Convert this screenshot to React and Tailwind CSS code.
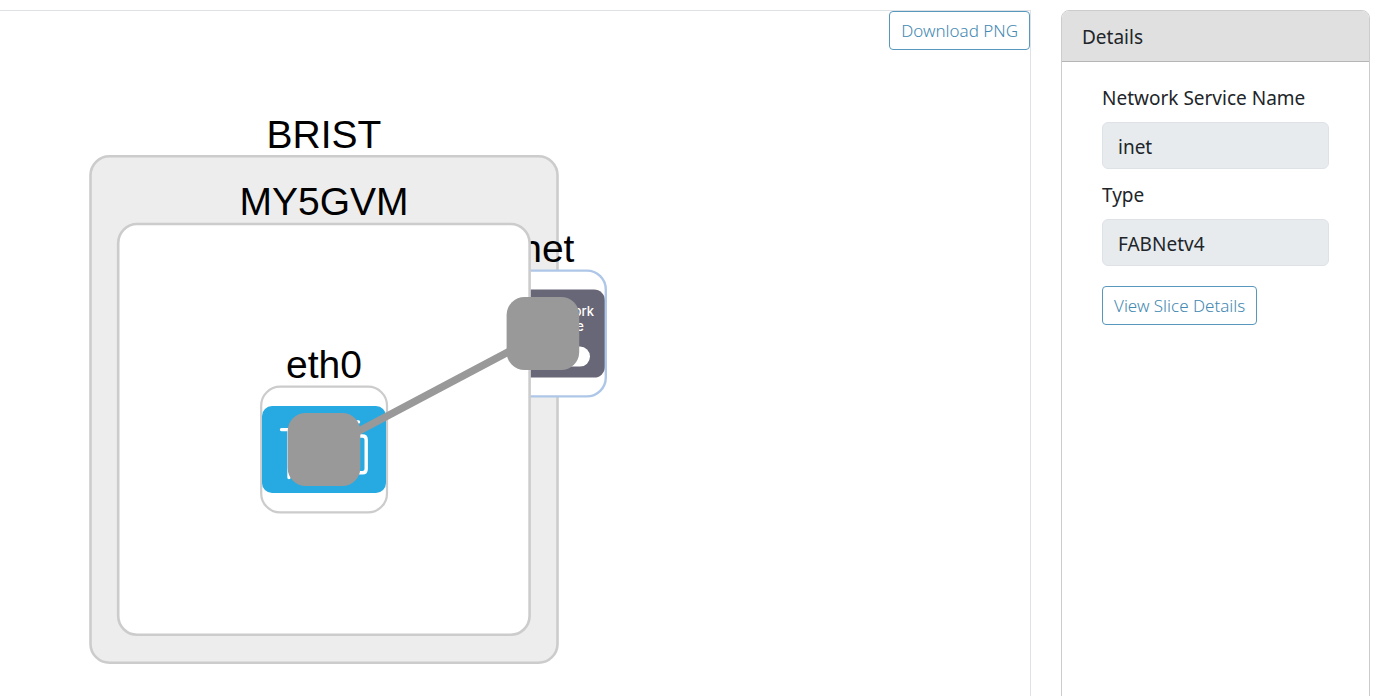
import { useId } from "react";

function TopologyGraph() {
  return (
    <svg
      width="1020"
      height="685"
      viewBox="0 11 1020 685"
      className="block shrink-0 font-['Liberation_Sans',Arial,sans-serif] text-[39px]"
      role="img"
      aria-label="Slice topology"
    >
      <rect x="90.5" y="156.3" width="467" height="506.4" rx="19" fill="#ededed" stroke="#cccccc" strokeWidth="2.6" />
      <text x="324" y="148" textAnchor="middle">BRIST</text>

      {/* network service node */}
      <text x="543" y="262" textAnchor="middle">inet</text>
      <rect x="480" y="270.6" width="125.8" height="125.8" rx="19" fill="#ffffff" />
      <rect x="481" y="289.6" width="124" height="88" rx="11" fill="#686777" />
      <text textAnchor="end" fill="#ffffff" className="font-['Inter',sans-serif] text-[13px] font-medium">
        <tspan x="594" y="316">Network</tspan>
        <tspan x="584" y="331">Service</tspan>
      </text>
      <rect x="496" y="346.6" width="94" height="20" rx="10" fill="#ffffff" />
      <rect x="480" y="270.6" width="125.8" height="125.8" rx="19" fill="none" stroke="#aec7e8" strokeWidth="2.4" />

      {/* virtual machine */}
      <rect x="118.2" y="224" width="411.4" height="410.8" rx="19" fill="#ffffff" stroke="#cccccc" strokeWidth="2.6" />
      <text x="324" y="215" textAnchor="middle">MY5GVM</text>

      {/* network interface */}
      <text x="324" y="378" textAnchor="middle">eth0</text>
      <rect x="261.2" y="386.6" width="125.8" height="125.8" rx="19" fill="#ffffff" stroke="#cccccc" strokeWidth="2.2" />
      <rect x="262" y="406" width="124" height="87" rx="10" fill="#27aae1" />
      <g fill="none" stroke="#ffffff" strokeWidth="3.4" strokeLinecap="round" strokeLinejoin="round">
        <path d="M281.5 429.6H289V477.5" />
        <path d="M340 422H358.5" />
        <path d="M350 436H362.5Q366.2 436 366.2 439.7V469Q366.2 472.8 362.5 472.8H350" />
      </g>

      <path d="M324 449.6L543 333.5" stroke="#999999" strokeWidth="7.4" />
      <rect x="287.7" y="413" width="72.6" height="73" rx="18" fill="#999999" />
      <rect x="506.6" y="297" width="72.6" height="73" rx="18" fill="#999999" />
    </svg>
  );
}

function OutlineButton({ children, className = "" }) {
  return (
    <button
      type="button"
      className={`rounded border border-[#5798bc] bg-white px-[11px] py-[5px] text-[17px] leading-[27px] font-light whitespace-nowrap text-[#4389b1] ${className}`}
    >
      {children}
    </button>
  );
}

function ReadOnlyField({ label, value }) {
  const id = useId();
  return (
    <div className="flex flex-col gap-[9px]">
      <label htmlFor={id} className="leading-[30px]">{label}</label>
      <input
        id={id}
        readOnly
        defaultValue={value}
        className="h-[47px] w-full rounded-md border border-[#dee2e6] bg-[#e7ebee] px-[15px] pt-[2px]"
      />
    </div>
  );
}

export default function App() {
  return (
    <div className="flex h-screen gap-[30px] overflow-hidden bg-white pt-[10px] pr-[13px] font-['Noto_Sans',sans-serif] text-[19px] text-[#212529]">
      <main className="relative flex min-w-0 flex-1 overflow-hidden border-t border-r border-[#dee2e6]">
        <TopologyGraph />
        <OutlineButton className="absolute top-0 right-0">Download PNG</OutlineButton>
      </main>
      <aside className="-mb-4 w-[309px] shrink-0 overflow-hidden rounded-lg border border-[#cccccc] bg-white">
        <h2 className="border-b border-[#b5b5b5] bg-[#e0e0e0] px-5 pt-[11px] pb-[9px] leading-[30px]">Details</h2>
        <div className="flex flex-col items-start gap-5 px-10 py-[21px]">
          <div className="flex w-full flex-col gap-[11px]">
            <ReadOnlyField label="Network Service Name" value="inet" />
            <ReadOnlyField label="Type" value="FABNetv4" />
          </div>
          <OutlineButton>View Slice Details</OutlineButton>
        </div>
      </aside>
    </div>
  );
}
